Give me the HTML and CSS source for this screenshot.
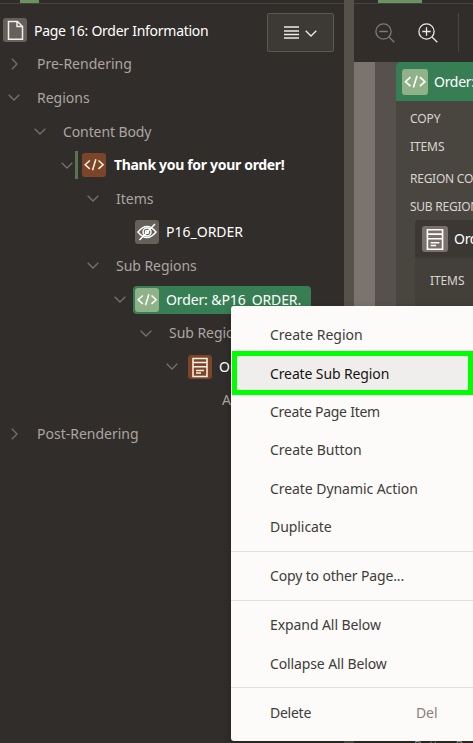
FILE: index.html
```html
<!DOCTYPE html>
<html lang="en">
<head>
<meta charset="utf-8">
<title>Page Designer</title>
<link rel="stylesheet" href="styles.css">
</head>
<body>
<svg class="defs" aria-hidden="true">
  <symbol id="down" viewBox="0 0 12 7"><path d="M.7.8 6 6 11.3.8"/></symbol>
  <symbol id="right" viewBox="0 0 7 12"><path d="M.8.7 6 6 .8 11.3"/></symbol>
  <symbol id="code" viewBox="0 0 24 24"><path d="M7.8 7.5 3.2 11.7l4.6 4.2M16.5 7.5l4.6 4.2-4.6 4.2M13.9 6.2l-3.4 11"/></symbol>
  <symbol id="form" viewBox="0 0 24 24"><path d="M5 3.5h14v18H5zM5 7.5h14M5 11.8h14M8 15.5h8M8 18h5"/></symbol>
</svg>
<div class="app">
  <section class="tree-pane">
    <div class="tabs"><span class="tab tab-tree"></span></div>
    <header class="tree-head">
      <span class="tile tile-page"><svg viewBox="0 0 24 24"><path d="M5.5 3.5h9l5 5v12.8h-14zM14 3.5v5h5"/></svg></span>
      <span class="page-title">Page 16: Order Information</span>
      <button class="menu-button" aria-label="Menu">
        <svg class="lines" viewBox="0 0 15 13"><path d="M0 1h15M0 5h15M0 8.5h15M0 12h15"/></svg>
        <svg class="arrow"><use href="#down"/></svg>
      </button>
    </header>
    <div class="tree">
      <div class="row level-0"><svg class="arrow side"><use href="#right"/></svg><span class="group pre">Pre-Rendering</span></div>
      <div class="row level-0"><svg class="arrow"><use href="#down"/></svg><span class="group regions">Regions</span></div>
      <div class="row level-1"><svg class="arrow"><use href="#down"/></svg><span class="group content">Content Body</span></div>
      <div class="row level-2"><svg class="arrow"><use href="#down"/></svg><span class="node marked"><span class="tile tile-brown"><svg><use href="#code"/></svg></span><b class="thanks">Thank you for your order!</b></span></div>
      <div class="row level-3"><svg class="arrow"><use href="#down"/></svg><span class="group items">Items</span></div>
      <div class="row level-4"><span class="arrow"></span><span class="node"><span class="tile tile-grey"><svg viewBox="0 0 24 24"><path d="M3 12q9-11 18 0-9 11-18 0zM4.5 20 20 4"/><circle cx="12" cy="12" r="4"/><circle cx="12" cy="12" r="1.5"/></svg></span><span class="p16">P16_ORDER</span></span></div>
      <div class="row level-3"><svg class="arrow"><use href="#down"/></svg><span class="group subs">Sub Regions</span></div>
      <div class="row level-4"><svg class="arrow"><use href="#down"/></svg><span class="node selected"><span class="tile tile-green"><svg><use href="#code"/></svg></span><span class="order">Order: &amp;P16_ORDER.</span></span></div>
      <div class="row level-5"><svg class="arrow"><use href="#down"/></svg><span class="group subs">Sub Regions</span></div>
      <div class="row level-6"><svg class="arrow"><use href="#down"/></svg><span class="node"><span class="tile tile-brown"><svg><use href="#form"/></svg></span><span class="detail">Order</span></span></div>
      <div class="row level-7"><span class="arrow"></span><span class="group">Attributes</span></div>
      <div class="row level-0"><svg class="arrow side"><use href="#right"/></svg><span class="group post">Post-Rendering</span></div>
    </div>
  </section>
  <div class="splitter"></div>
  <section class="layout-pane">
    <div class="tabs"><span class="tab tab-layout"></span></div>
    <div class="toolbar">
      <svg class="zoom dim" viewBox="0 0 20 20"><circle cx="8.5" cy="8.5" r="7.6"/><path d="m14 14 5.3 5.3M4.3 8.5h8.4"/></svg>
      <svg class="zoom" viewBox="0 0 20 20"><circle cx="8.5" cy="8.5" r="7.6"/><path d="m14 14 5.3 5.3M4.3 8.5h8.4M8.5 4.3v8.4"/></svg>
      <span class="rule"></span>
    </div>
    <div class="canvas">
      <div class="region">
        <div class="region-head"><span class="tile tile-green big"><svg><use href="#code"/></svg></span><span class="head-text">Order: &amp;P16_ORDER.</span></div>
        <div class="slot s1">COPY</div>
        <div class="slot s2">ITEMS</div>
        <div class="slot s3">REGION CONTENT</div>
        <div class="slot s4">SUB REGIONS</div>
        <div class="inner">
          <div class="inner-head"><span class="tile tile-taupe big"><svg><use href="#form"/></svg></span><span class="head-text">Order</span></div>
          <div class="slot s5">ITEMS</div>
        </div>
      </div>
    </div>
    <div class="gallery"><span class="gallery-icon"></span><span>Button Region</span></div>
  </section>
</div>
<nav class="context-menu">
  <div class="item m1">Create Region</div>
  <div class="item active m2">Create Sub Region</div>
  <div class="item m3">Create Page Item</div>
  <div class="item m4">Create Button</div>
  <div class="item m5">Create Dynamic Action</div>
  <div class="item m6">Duplicate</div>
  <hr>
  <div class="item m7">Copy to other Page...</div>
  <hr>
  <div class="item m8">Expand All Below</div>
  <div class="item m9">Collapse All Below</div>
  <hr>
  <div class="item m10"><span>Delete</span><kbd>Del</kbd></div>
</nav>
</body>
</html>
```
FILE: styles.css
```css
* { box-sizing: border-box; }
body { margin: 0; height: 743px; overflow: hidden; background: #312d2a; color: #fff; font: 14px/20px "Noto Sans", sans-serif; }
svg { display: block; fill: none; stroke: currentColor; stroke-width: 1.3; }
.defs { position: absolute; width: 0; height: 0; }
.app { display: flex; height: 743px; overflow: hidden; }
.tree-pane { flex: 0 0 344px; overflow: hidden; white-space: nowrap; }
.splitter { flex: 0 0 10px; background: #565149; }
.layout-pane { flex: 1; min-width: 0; overflow: hidden; display: flex; flex-direction: column; white-space: nowrap; }
.tabs { flex: 0 0 4px; height: 4px; border-bottom: 1px solid #474340; }
.tab { display: block; height: 3px; background: #6b9362; }
.tab-tree { width: 19px; margin-left: 20px; }
.tab-layout { width: 44px; margin-left: 24px; }
.tree-head { display: flex; height: 43px; padding: 9px 0 0 3px; }
.tile { flex: none; width: 24px; height: 24px; border-radius: 3px; color: #fff; }
.tile svg { width: 100%; height: 100%; stroke-width: 1.5; }
.tile-page, .tile-grey { background: #66605a; }
.tile-page { margin-top: 5px; color: #f1eeeb; }
.tile-brown { background: #7c4529; color: #fff2e3; }
.tile-green { background: #8fb288; }
.tile-taupe { background: #7b716c; }
.big { width: 26px; height: 26px; }
.page-title { width: 232px; margin: 8px 0 0 7px; letter-spacing: -.27px; }
.menu-button { width: 67px; height: 39px; margin-left: 1px; padding: 0 0 0 16px; display: flex; gap: 6px; align-items: center; background: #3d3935; border: 1px solid #5c5751; border-radius: 2px; color: #eeeae6; }
.lines { width: 15px; height: 13px; }
.menu-button .arrow { color: #eeeae6; margin-top: 2px; }
.tree { display: flex; flex-direction: column; padding-top: .5px; }
.row { height: 33.62px; display: flex; align-items: center; }
.arrow { flex: none; width: 12px; height: 7px; color: #77716c; }
.side { width: 7px; height: 12px; margin: 0 2px 0 3px; }
.group { margin-left: 17px; color: #aaa6a2; }
.subs { letter-spacing: -.05px; }
.content { letter-spacing: -.1px; }
.thanks { letter-spacing: -.32px; }
.p16, .order, .detail { margin-left: -1px; }
.order { letter-spacing: -.12px; }
.level-0 { padding-left: 8px; }
.level-1 { padding-left: 34px; }
.level-2 { padding-left: 61px; }
.level-3 { padding-left: 87px; }
.level-4 { padding-left: 114px; }
.level-5 { padding-left: 140px; }
.level-6 { padding-left: 166px; }
.level-7 { padding-left: 193px; }
.node { display: flex; align-items: center; gap: 8px; height: 28px; margin-left: 7px; padding: 0 10px 0 2px; }
.marked { margin-left: 2px; padding-left: 4px; border-left: 3px solid #587452; }
.level-6 .node { margin-left: 8px; }
.selected { background: #387e55; border-radius: 4px; width: 178px; }
.toolbar { flex: 0 0 58px; display: flex; align-items: flex-start; padding: 19px 0 0 21px; }
.zoom { width: 20px; height: 20px; margin-right: 23px; color: #eae7e4; }
.dim { color: #817a75; }
.rule { width: 1px; height: 39px; margin: -10px 0 0 -3px; background: #494541; }
.canvas { height: 678px; background: #56514d; border-left: 21px solid #7b736e; padding-left: 21px; }
.region { width: 180px; height: 678px; background: #494640; border-radius: 5px 0 0; }
.region-head { display: flex; align-items: center; gap: 7px; height: 39px; padding-left: 6px; background: #387e55; border-radius: 5px 0 0; }
.head-text { margin-left: -1px; letter-spacing: -.3px; }
.slot { height: 28px; line-height: 28px; padding-left: 14px; font-size: 12px; letter-spacing: -.1px; color: #d9d5d0; }
.s1 { margin-top: 4px; }
.s3 { margin-top: 4px; }
.s3, .s4 { letter-spacing: -.25px; }
.inner { margin: -1px 0 0 19px; height: 400px; background: #43403a; border-radius: 4px 0 0; }
.inner-head { display: flex; align-items: center; gap: 7px; height: 38px; padding-left: 7px; background: #3b3833; border-radius: 4px 0 0; }
.s5 { margin-top: 9px; padding-left: 15px; }
.gallery { height: 20px; display: flex; gap: 60px; font-size: 12px; line-height: 12px; color: #aaa6a2; }
.gallery-icon { width: 4px; height: 3px; background: #56514d; }
.context-menu { position: absolute; left: 231px; top: 306px; width: 242px; height: 435px; padding-top: 10px; overflow: hidden; background: #fcfbfa; border-radius: 3px 0 0 3px; box-shadow: 0 2px 7px #0004; color: #403c38; }
.item { height: 38.4px; line-height: 38.4px; padding-left: 39px; white-space: nowrap; letter-spacing: -.06px; }
.active { height: 44px; line-height: 36px; margin: -3px 0 -2.6px 1px; padding-left: 33px; border: 5px solid #0f0; background: #f0eeec; color: #161513; }
.context-menu hr { height: 1px; margin: 4.8px 0; border: 0; background: #e1dedb; }
.m1, .m4 { letter-spacing: 0; }
.m2 { letter-spacing: -.12px; }
.m3 { letter-spacing: -.25px; }
.m7 { letter-spacing: -.15px; }
.m8 { height: 38.9px; letter-spacing: -.08px; }
.m9 { height: 37.4px; letter-spacing: -.12px; }
.m10 { display: flex; padding-top: 1px; letter-spacing: -.25px; }
.m10 span { width: 146px; }
kbd { font: inherit; color: #85817d; letter-spacing: -.1px; }
```
